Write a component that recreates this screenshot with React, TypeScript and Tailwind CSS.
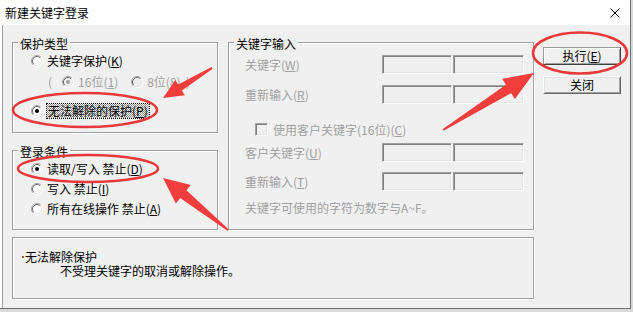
import React from "react";

function Radio({ checked = false, disabled = false }: { checked?: boolean; disabled?: boolean }) {
  return (
    <svg width="12" height="12" viewBox="0 0 12 12" className="shrink-0 block">
      <circle cx="6" cy="6" r="5" fill={disabled ? "#f0f0f0" : "#ffffff"} />
      <path d="M9.89 2.11 A5.5 5.5 0 0 0 2.11 9.89" fill="none" stroke="#a0a0a0" strokeWidth="1" />
      <path d="M9.18 2.82 A4.5 4.5 0 0 0 2.82 9.18" fill="none" stroke="#696969" strokeWidth="1" />
      <path d="M9.89 2.11 A5.5 5.5 0 0 1 2.11 9.89" fill="none" stroke="#ffffff" strokeWidth="1" />
      <path d="M9.18 2.82 A4.5 4.5 0 0 1 2.82 9.18" fill="none" stroke="#e3e3e3" strokeWidth="1" />
      {checked && <circle cx="6" cy="6" r="2" fill={disabled ? "#a0a0a0" : "#000000"} />}
    </svg>
  );
}

function Field({ wide = false }: { wide?: boolean }) {
  return (
    <div
      className={
        wide
          ? "w-[71px] h-[19px] bg-[#f0f0f0] border border-t-[#a0a0a0] border-l-[#a0a0a0] border-r-white border-b-white shadow-[inset_1px_1px_0_#808080,inset_-1px_-1px_0_#e3e3e3]"
          : "w-[70px] h-[19px] bg-[#f0f0f0] border border-t-[#a0a0a0] border-l-[#a0a0a0] border-r-white border-b-white shadow-[inset_1px_1px_0_#808080,inset_-1px_-1px_0_#e3e3e3]"
      }
    />
  );
}

function InputRow({ label, u, top }: { label: string; u: string; top: string }) {
  return (
    <div className={"flex h-[19px] pl-[16px] " + top}>
      <div className="w-[137px] pt-[3px] text-[#a0a0a0] whitespace-nowrap">
        {label}(<span className="underline underline-offset-1">{u}</span>)
      </div>
      <Field />
      <div className="ml-[1px]">
        <Field wide />
      </div>
    </div>
  );
}

function arrowPoints(tx: number, ty: number, px: number, py: number, H: number, W: number, w1: number, w0: number) {
  const dx = px - tx;
  const dy = py - ty;
  const len = Math.hypot(dx, dy);
  const ux = dx / len;
  const uy = dy / len;
  const nx = -uy;
  const ny = ux;
  const bx = px - ux * H;
  const by = py - uy * H;
  const pts = [
    [tx + nx * w0, ty + ny * w0],
    [bx + nx * w1, by + ny * w1],
    [bx + nx * W, by + ny * W],
    [px, py],
    [bx - nx * W, by - ny * W],
    [bx - nx * w1, by - ny * w1],
    [tx - nx * w0, ty - ny * w0],
  ];
  return pts.map((p) => p[0].toFixed(1) + "," + p[1].toFixed(1)).join(" ");
}

export default function App() {
  return (
    <div className="w-[633px] h-[312px] bg-[#d9d9d9] relative overflow-hidden font-['Noto_Sans_CJK_SC','Noto_Sans',sans-serif] text-[12px] leading-[14px] text-black">
      <div className="w-[631px] h-[309px] flex flex-col bg-white border-r border-b border-[#707070]">
        {/* title bar */}
        <div className="h-[25px] shrink-0 flex items-center justify-between pl-[5px] pr-[10px]">
          <span className="text-[12px]">新建关键字登录</span>
          <svg width="10" height="10" viewBox="0 0 10 10" className="block">
            <path d="M0.5 0.5 L9.5 9.5 M9.5 0.5 L0.5 9.5" stroke="#000" strokeWidth="1" />
          </svg>
        </div>

        {/* body */}
        <div className="flex-1 ml-[2px] border-l border-[#a0a0a0] bg-[#f0f0f0] pl-[9px] pt-[17px]">
          <div className="flex items-start">
            {/* left column */}
            <div className="w-[206px] flex flex-col">
              <div className="h-[91px] border border-[#a0a0a0] shadow-[1px_1px_0_#fff,inset_1px_1px_0_#fff]">
                <div className="-mt-[6px] ml-[5px] px-[2px] w-fit bg-[#f0f0f0] h-[14px]">保护类型</div>
                <div className="h-[20px] flex items-center pl-[18px] gap-[4px]">
                  <Radio />
                  <span>
                    关键字保护(<span className="underline underline-offset-1">K</span>)
                  </span>
                </div>
                <div className="h-[22px] flex items-center pl-[35px] text-[#a0a0a0]">
                  <span>(</span>
                  <span className="ml-[10px]">
                    <Radio checked disabled />
                  </span>
                  <span className="ml-[4px]">
                    16位(<span className="underline underline-offset-1">1</span>)
                  </span>
                  <span className="ml-[13px]">
                    <Radio disabled />
                  </span>
                  <span className="ml-[4px]">
                    8位(<span className="underline underline-offset-1">8</span>)
                  </span>
                  <span className="ml-[5px]">)</span>
                </div>
                <div className="mt-[7px] h-[22px] flex items-center pl-[18px] gap-[4px]">
                  <Radio checked />
                  <span className="px-[1px] outline outline-1 outline-dotted outline-[#000] bg-[repeating-conic-gradient(#8c8c8c_0_25%,#ffffff_0_50%)] bg-[length:2px_2px]">
                    无法解除的保护(<span className="underline underline-offset-1">P</span>)
                  </span>
                </div>
              </div>

              <div className="mt-[17px] h-[80px] border border-[#a0a0a0] shadow-[1px_1px_0_#fff,inset_1px_1px_0_#fff]">
                <div className="-mt-[6px] ml-[5px] px-[2px] w-fit bg-[#f0f0f0] h-[14px]">登录条件</div>
                <div className="h-[20px] flex items-center pl-[18px] gap-[4px]">
                  <Radio checked />
                  <span>
                    读取/写入 禁止(<span className="underline underline-offset-1">D</span>)
                  </span>
                </div>
                <div className="h-[20px] flex items-center pl-[18px] gap-[4px]">
                  <Radio />
                  <span>
                    写入 禁止(<span className="underline underline-offset-1">I</span>)
                  </span>
                </div>
                <div className="h-[20px] flex items-center pl-[18px] gap-[4px]">
                  <Radio />
                  <span>
                    所有在线操作 禁止(<span className="underline underline-offset-1">A</span>)
                  </span>
                </div>
              </div>
            </div>

            {/* key input group */}
            <div className="ml-[10px] w-[306px] h-[188px] border border-[#a0a0a0] shadow-[1px_1px_0_#fff,inset_1px_1px_0_#fff]">
              <div className="-mt-[6px] ml-[5px] px-[2px] w-fit bg-[#f0f0f0] h-[14px]">关键字输入</div>
              <InputRow label="关键字" u="W" top="mt-[4px]" />
              <InputRow label="重新输入" u="R" top="mt-[11px]" />
              <div className="mt-[19px] h-[13px] flex items-center pl-[26px] gap-[5px] text-[#a0a0a0]">
                <div className="w-[13px] h-[13px] shrink-0 bg-[#f0f0f0] border border-t-[#a0a0a0] border-l-[#a0a0a0] border-r-white border-b-white shadow-[inset_1px_1px_0_#808080,inset_-1px_-1px_0_#e3e3e3]" />
                <span className="whitespace-nowrap">
                  使用客户关键字(16位)(<span className="underline underline-offset-1">C</span>)
                </span>
              </div>
              <InputRow label="客户关键字" u="U" top="mt-[7px]" />
              <InputRow label="重新输入" u="T" top="mt-[10px]" />
              <div className="mt-[10px] pl-[16px] text-[#a0a0a0] whitespace-nowrap">关键字可使用的字符为数字与A~F。</div>
            </div>

            {/* buttons */}
            <div className="ml-[9px] mt-[5px] flex flex-col gap-[11px]">
              <div className="w-[78px] h-[18px] flex items-center justify-center bg-[#f0f0f0] border border-t-[#9a9a9a] border-l-[#9a9a9a] border-r-[#404040] border-b-[#404040] shadow-[inset_1px_1px_0_#fff,inset_-1px_-1px_0_#a0a0a0]">
                执行(<span className="underline underline-offset-1">E</span>)
              </div>
              <div className="w-[78px] h-[18px] flex items-center justify-center bg-[#f0f0f0] border border-t-white border-l-white border-r-[#696969] border-b-[#696969] shadow-[inset_1px_1px_0_#e3e3e3,inset_-1px_-1px_0_#a0a0a0]">
                关闭
              </div>
            </div>
          </div>

          {/* description */}
          <div className="mt-[7px] w-[522px] h-[62px] border border-[#a0a0a0] shadow-[1px_1px_0_#fff,inset_1px_1px_0_#fff] pt-[12px] pl-[9px] leading-[14px]">
            <div className="flex items-center h-[14px]">
              <span className="w-[2px] h-[2px] bg-[#9a6a3a] mr-[1px]" />
              <span>无法解除保护</span>
            </div>
            <div className="pl-[38px] h-[14px]">不受理关键字的取消或解除操作。</div>
          </div>
        </div>
      </div>

      {/* annotations */}
      <svg className="absolute inset-0 pointer-events-none" width="633" height="312" viewBox="0 0 633 312">
        <ellipse cx="580" cy="53" rx="47" ry="20.5" fill="none" stroke="#e8383a" strokeWidth="2.6" />
        <ellipse cx="85" cy="110" rx="72" ry="17" fill="none" stroke="#e8383a" strokeWidth="2.6" />
        <ellipse cx="88" cy="168.5" rx="70" ry="13.5" fill="none" stroke="#e8383a" strokeWidth="2.6" />
        <polygon points={arrowPoints(212, 68, 163, 98, 20, 9, 3.5, 1)} fill="#f23d3d" />
        <polygon points={arrowPoints(228, 230, 163, 178, 26, 12, 5, 1)} fill="#f23d3d" />
        <polygon points={arrowPoints(443, 130, 534, 73, 30, 12, 5, 1)} fill="#f23d3d" />
      </svg>
    </div>
  );
}
